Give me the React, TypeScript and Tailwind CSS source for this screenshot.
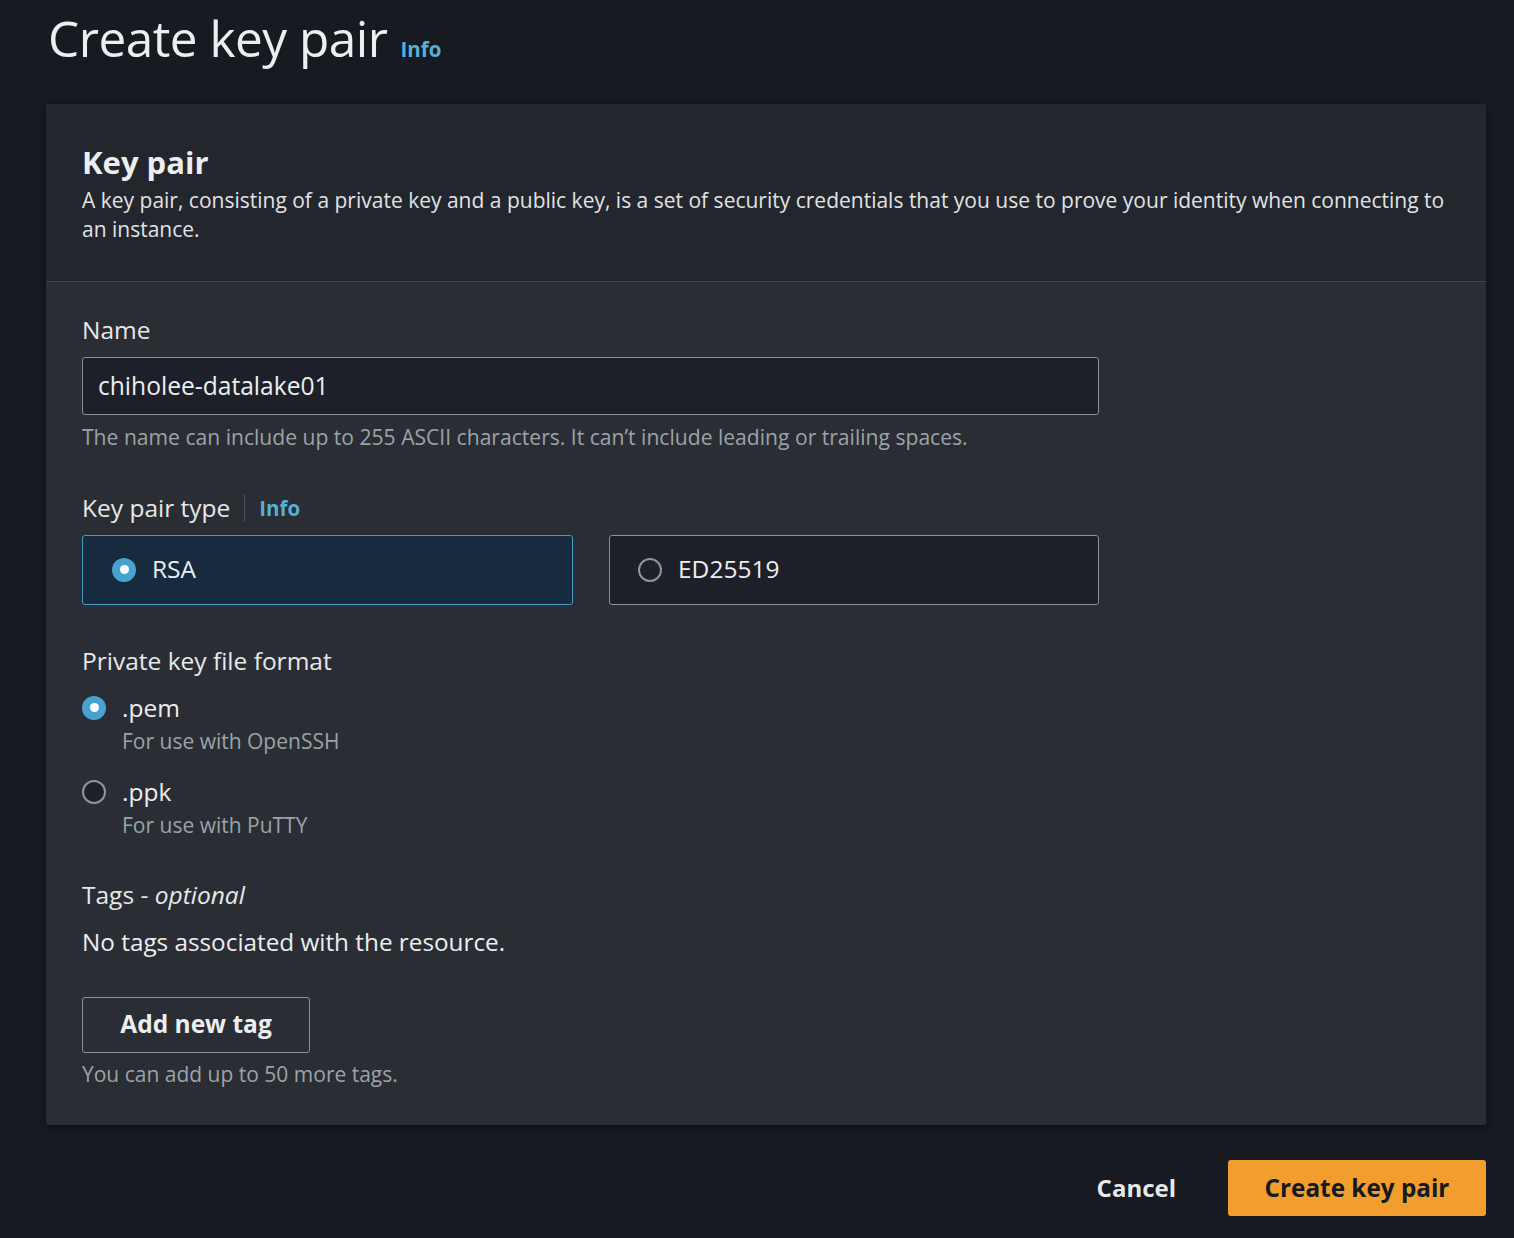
import React from "react";

function Radio({ checked }: { checked: boolean }) {
  return checked ? (
    <span className="flex h-[24px] w-[24px] shrink-0 items-center justify-center rounded-full bg-[#48a2d1]">
      <span className="block h-[9px] w-[9px] rounded-full bg-white" />
    </span>
  ) : (
    <span className="block h-[24px] w-[24px] shrink-0 rounded-full border-2 border-[#8d9699] bg-[#1e2129]" />
  );
}

export default function App() {
  return (
    <div
      className="min-h-[1238px] w-full bg-[#171a21] text-[#eceeef]"
      style={{ fontFamily: '"Open Sans", "Noto Sans", sans-serif' }}
    >
      <div className="px-[46px] pt-[6px]">
        <div className="flex items-baseline gap-[13px] pl-[2px]">
          <h1 className="text-[49.5px] leading-[64px] font-normal tracking-[-0.5px] text-[#eceeef]">Create key pair</h1>
          <span className="text-[20.5px] font-bold text-[#55b0d8]">Info</span>
        </div>

        <div className="mt-[34px] w-[1440px] rounded-[2px] bg-[#2a2d33] shadow-[0_2px_6px_rgba(0,0,0,0.5)]">
          <div className="border-b border-[#41454c] bg-[#23262d] px-[36px] pt-[38px] pb-[37px]">
            <h2 className="text-[31px] leading-[40px] font-bold text-[#eceeef]">Key pair</h2>
            <p className="mt-[4px] text-[21px] leading-[29px] text-[#e0e3e5]">
              A key pair, consisting of a private key and a public key, is a set of security credentials that you use to prove your identity when connecting to an instance.
            </p>
          </div>

          <div className="px-[36px] pt-[33px] pb-[36px]">
            <div className="text-[24.5px] leading-[30px] text-[#e6e8ea]">Name</div>
            <div className="mt-[12px] flex h-[58px] w-[1017px] items-center rounded-[3px] border border-[#8a9297] bg-[#1d2028] px-[15px] text-[24.6px] text-[#eceeef]">
              chiholee-datalake01
            </div>
            <div className="mt-[8px] text-[21.1px] leading-[28px] text-[#9aa4a8]">
              The name can include up to 255 ASCII characters. It can’t include leading or trailing spaces.
            </div>

            <div className="mt-[42px] flex items-center">
              <span className="text-[24.5px] leading-[30px] text-[#e6e8ea]">Key pair type</span>
              <span className="mx-[14px] h-[28px] w-px bg-[#4a4f55]" />
              <span className="text-[20.5px] font-bold text-[#55b0d8]">Info</span>
            </div>
            <div className="mt-[11px] flex gap-[36px]">
              <div className="flex h-[70px] w-[491px] items-center gap-[16px] rounded-[3px] border border-[#3e9ccd] bg-[#172a3e] pl-[29px]">
                <Radio checked />
                <span className="text-[24.5px] text-[#eceeef]">RSA</span>
              </div>
              <div className="flex h-[70px] w-[490px] items-center gap-[16px] rounded-[3px] border border-[#8a9297] bg-[#1d2028] pl-[28px]">
                <Radio checked={false} />
                <span className="text-[24.5px] text-[#eceeef]">ED25519</span>
              </div>
            </div>

            <div className="mt-[41px] text-[24.5px] leading-[30px] text-[#e6e8ea]">Private key file format</div>
            <div className="mt-[16px] flex flex-col gap-[18px]">
              <div className="flex items-start gap-[16px]">
                <div className="mt-[4px]"><Radio checked /></div>
                <div>
                  <div className="text-[24.5px] leading-[32px] text-[#eceeef]">.pem</div>
                  <div className="text-[21px] leading-[34px] text-[#9aa4a8]">For use with OpenSSH</div>
                </div>
              </div>
              <div className="flex items-start gap-[16px]">
                <div className="mt-[4px]"><Radio checked={false} /></div>
                <div>
                  <div className="text-[24.5px] leading-[32px] text-[#eceeef]">.ppk</div>
                  <div className="text-[21px] leading-[34px] text-[#9aa4a8]">For use with PuTTY</div>
                </div>
              </div>
            </div>

            <div className="mt-[38px] text-[24.5px] leading-[30px] text-[#e6e8ea]">
              Tags - <i>optional</i>
            </div>
            <div className="mt-[16px] text-[24.3px] leading-[32px] text-[#eceeef]">No tags associated with the resource.</div>
            <div className="mt-[39px] flex h-[56px] w-[228px] items-center justify-center rounded-[3px] border border-[#8a9297] text-[24.5px] font-bold text-[#eceeef]">
              Add new tag
            </div>
            <div className="mt-[6px] text-[21px] leading-[30px] text-[#9aa4a8]">You can add up to 50 more tags.</div>
          </div>
        </div>

        <div className="mt-[35px] flex w-[1440px] items-center justify-end gap-[52px]">
          <span className="text-[24px] font-bold text-[#e6e8ea]">Cancel</span>
          <div className="flex h-[56px] w-[258px] items-center justify-center rounded-[3px] bg-[#f29e2e] text-[24.3px] font-bold text-[#16191f]">
            Create key pair
          </div>
        </div>
      </div>
    </div>
  );
}
